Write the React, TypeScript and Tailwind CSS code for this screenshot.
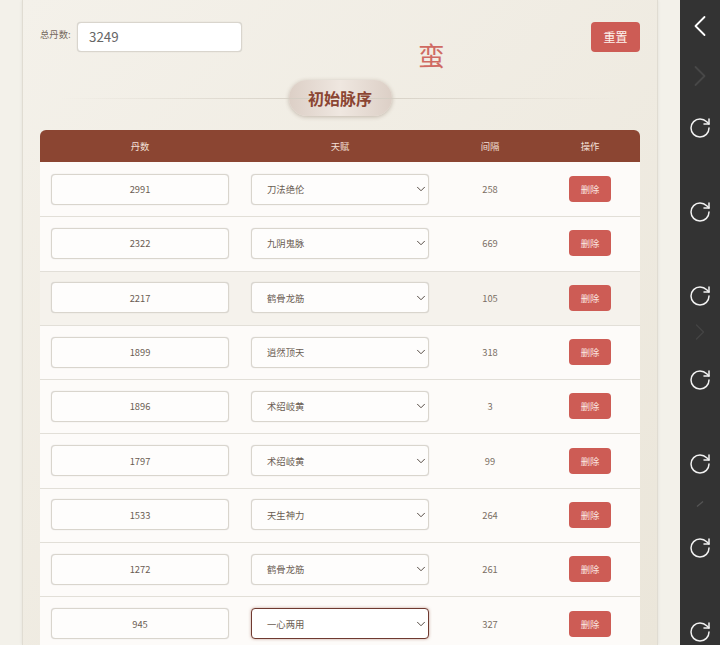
import { RotateCw, ChevronLeft, ChevronRight, ChevronDown } from "lucide-react";

const rows = [
  { dan: 2991, talent: "刀法绝伦", gap: 258 },
  { dan: 2322, talent: "九阴鬼脉", gap: 669 },
  { dan: 2217, talent: "鹤骨龙筋", gap: 105, shaded: true },
  { dan: 1899, talent: "逍然顶天", gap: 318 },
  { dan: 1896, talent: "术绍岐黄", gap: 3 },
  { dan: 1797, talent: "术绍岐黄", gap: 99 },
  { dan: 1533, talent: "天生神力", gap: 264 },
  { dan: 1272, talent: "鹤骨龙筋", gap: 261 },
  { dan: 945, talent: "一心两用", gap: 327, focused: true },
];

function Row({ dan, talent, gap, shaded, focused, first }: { dan: number; talent: string; gap: number; shaded?: boolean; focused?: boolean; first?: boolean }) {
  return (
    <div className={`flex h-[54.3px] shrink-0 items-center border-t pb-[1px] ${first ? "border-transparent" : "border-[#e2dfd8]"} ${shaded ? "bg-[#f5f2ec]" : "bg-[#fdfbf9]"}`}>
      <div className="flex w-[200px] justify-center">
        <div className="flex h-[31px] w-[178px] items-center justify-center rounded border border-[#d9d5cd] bg-[#fefdfc] text-[9.33px] text-[#6a5c52] shadow-[0_0_1px_rgba(0,0,0,0.2)]">
          {dan}
        </div>
      </div>
      <div className="flex w-[200px] justify-center">
        <div className={`flex h-[31px] w-[178px] items-center justify-between rounded pl-[15px] text-[9.33px] text-[#6a5c52] ${focused ? "border border-[#6f3a30] bg-white shadow-[0_0_3px_rgba(139,69,50,0.5)]" : "border border-[#d9d5cd] bg-[#fefdfc] shadow-[0_0_1px_rgba(0,0,0,0.2)]"}`}>
          <span>{talent}</span>
          <ChevronDown size={14} strokeWidth={1.6} className="text-[#4a4038]" />
        </div>
      </div>
      <div className="w-[100px] text-center text-[9.33px] text-[#7a6e64]">{gap}</div>
      <div className="flex w-[100px] justify-center">
        <button type="button" className="flex h-[26px] w-[42px] items-center justify-center rounded bg-[#cd5c55] text-[9.33px] text-[#fbe6e0]">
          删除
        </button>
      </div>
    </div>
  );
}

function Sidebar() {
  return (
    <div className="flex h-[645px] w-10 shrink-0 flex-col items-center overflow-hidden bg-[#333333] pt-2 text-white">
      <ChevronLeft size={36} strokeWidth={1.2} className="shrink-0" />
      <ChevronRight size={36} strokeWidth={1.2} className="mt-[14px] shrink-0 text-[#484848]" />
      <div className="mt-[22px] flex flex-col items-center">
        {Array.from({ length: 7 }).map((_, i) => (
          <div key={i} className="flex h-[84px] shrink-0 flex-col items-center">
            <RotateCw size={24} strokeWidth={1.5} className="shrink-0 text-[#f2f2f2]" />
            {i === 2 && <ChevronRight size={28} strokeWidth={1.2} className="mt-[10px] shrink-0 text-[#444444]" />}
            {i === 4 && (
              <svg width="10" height="8" viewBox="0 0 10 8" className="mt-[24px] shrink-0">
                <path d="M2 6.5 L8 1.5" stroke="#555555" strokeWidth="1.3" />
              </svg>
            )}
          </div>
        ))}
      </div>
    </div>
  );
}

export default function App() {
  return (
    <div className="flex h-[645px] w-[720px] overflow-hidden bg-[#f3f1ea] font-['Noto_Sans_CJK_SC','Noto_Sans',sans-serif]">
      <div className="h-full w-[680px] shrink-0 pl-[22px] pr-[22px]">
        <div className="flex h-full flex-col overflow-hidden border-x border-[#e0dcd2] bg-gradient-to-br from-[#f4f1ea] to-[#ebe6da] px-[17px] shadow-[0_0_3px_rgba(0,0,0,0.08)]">
          <div className="flex h-[130px] shrink-0 flex-col">
            <div className="flex h-[53px] shrink-0 items-start pt-[22px]">
              <span className="mt-[5px] w-[37px] shrink-0 text-[9.33px] leading-[15px] text-[#75685d]">总丹数:</span>
              <div className="flex h-[30px] w-[165px] items-center rounded border border-[#d9d5cd] bg-white pl-[11px] text-[13.33px] text-[#666666] shadow-[0_0_1px_rgba(0,0,0,0.2)]">
                3249
              </div>
              <span className="ml-[176px] mt-[18px] w-[27px] text-[26.67px] leading-[30px] text-[#cf6a62]">蛮</span>
              <button type="button" className="ml-[146px] flex h-[30px] w-[49px] items-center justify-center rounded bg-[#cd5c55] text-[12px] text-[#fdf3ee]">
                重置
              </button>
            </div>
            <div className="relative mt-[27px] flex h-[36px] items-center justify-center">
              <div className="flex h-[36px] w-[103px] items-center justify-center rounded-full bg-gradient-to-r from-[#dccfc6] via-[#efe7e0] to-[#dccfc6] shadow-[0_1px_4px_rgba(90,60,40,0.3)]" />
              <div className="absolute inset-x-5 top-[18px] h-px bg-gradient-to-r from-transparent via-[#d3cdc2] to-transparent" />
              <span className="absolute text-[16px] font-bold text-[#8b4532]">初始脉序</span>
            </div>
          </div>
          <div className="flex h-[32px] shrink-0 items-center rounded-t-md bg-[#8b4532] text-center text-[9.33px] text-[#f3e0d8]">
            <div className="w-[200px]">丹数</div>
            <div className="w-[200px]">天赋</div>
            <div className="w-[100px]">间隔</div>
            <div className="w-[100px]">操作</div>
          </div>
          {rows.map((r, i) => (
            <Row key={r.dan} first={i === 0} {...r} />
          ))}
        </div>
      </div>
      <Sidebar />
    </div>
  );
}
